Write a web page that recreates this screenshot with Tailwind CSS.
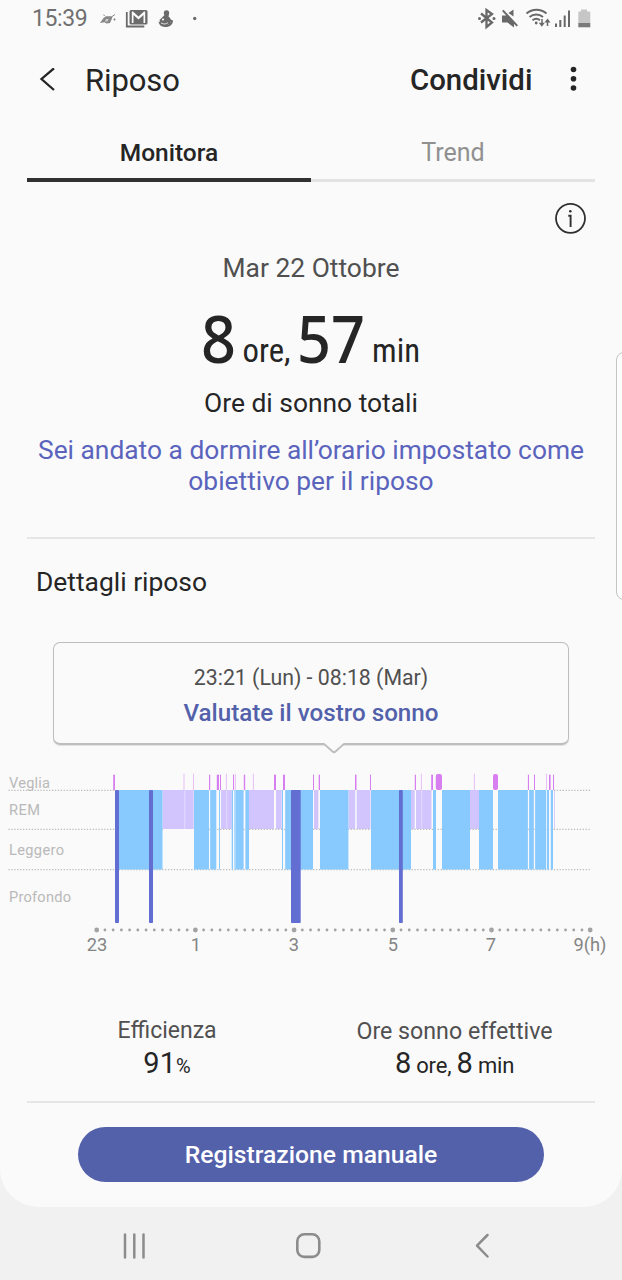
<!DOCTYPE html>
<html lang="it">
<head>
<meta charset="utf-8">
<title>Riposo</title>
<script src="https://cdn.jsdelivr.net/npm/@tailwindcss/browser@4"></script>
</head>
<body class="bg-[#f1f1f1] font-[Roboto,sans-serif] text-[#252525]">
<div class="relative flex h-[1280px] w-[622px] flex-col overflow-hidden">
  <main class="flex h-[1207px] flex-col rounded-b-[38px] bg-[#fafafa]">
    <!-- Status bar -->
    <div class="flex h-9 shrink-0 items-center justify-between pr-[31px] pl-8 text-[#707070]">
      <div class="flex items-center">
        <span class="w-[68px] pt-[2px] text-[23px] leading-9 tracking-[-0.4px] whitespace-nowrap">15:39</span>
        <svg class="h-[34px] w-[100px]" viewBox="100 0 100 34" fill="#6b6b6b">
          <path d="M100 22l3.500-5 2.500-1.800h6.500l-.5 2.300-2 4.500-3.500.5-2-1.200z" opacity=".8"/><path d="M105 20.500l1-2.500h2.500l-1 2.500z" fill="#d0d0d0"/><path d="M104.500 15l-.8-1.500M112 15.500l3-2" stroke="#8b8b8b"/><circle cx="114.500" cy="18.500" r=".9"/>
          <path d="M126.800 11v14.500h17.500" fill="none" stroke="#6b6b6b" stroke-width="1.800"/>
          <path fill-rule="evenodd" d="M131 9h15a1.500 1.500 0 0 1 1.500 1.500v11.500a1.500 1.500 0 0 1-1.500 1.500h-15a1.500 1.500 0 0 1-1.500-1.500v-11.500a1.500 1.500 0 0 1 1.500-1.500zM131.800 10.500v11.500h1.700v-8l5 4.500 5-4.500v8h1.700v-11.500h-1.200l-5.500 5-5.500-5z"/>
          <circle cx="166.500" cy="12" r="2.700"/><path d="M165 13.500h4l-.5 2c1.800 1.200 2.800 3 2.500 5l-1 3h-9l-1.500-4.500z"/><path d="M158.500 20.500c1 5 4.500 5.500 7.500 5.500s7-2 7-6.500l-2.500-1 .5 2.500-2 2.500z"/><circle cx="163" cy="18.500" r="1.100" fill="#fafafa"/><path d="M161 22c3 1.500 5 1.200 7-.3" fill="none" stroke="#fafafa" stroke-width=".8"/>
          <circle cx="194.700" cy="17.500" r="1.700"/>
        </svg>
      </div>
      <svg class="h-[34px] w-[114px]" viewBox="477 0 114 34" fill="#686868">
        <path d="M481 12.500l11 9-5.500 4.500V9l5.500 4-11 8.500" fill="none" stroke="#686868" stroke-width="2.300"/><circle cx="479.500" cy="17.500" r="1.500"/><circle cx="494" cy="17.500" r="1.500"/>
        <path d="M502 14.500h4.500l7.500 8v4l-6.500-5h-5.500zM508.500 12l5-3.500v7zM502 10l1.500-1.200 14.500 15.500-1.500 1.300z"/>
        <path d="M526.500 12.500a15 15 0 0 1 20 0M529.500 16a10.500 10.500 0 0 1 13.500 0M532.500 19.300a6 6 0 0 1 7.500 0" fill="none" stroke="#686868" stroke-width="1.900"/><circle cx="536.200" cy="22" r="1.400"/>
        <path d="M542 18v6M547.500 20v5" fill="none" stroke="#686868" stroke-width="1.500"/><path d="M538.800 21.800h6l-3 4zM544.500 21.500l3-4 3 4z"/>
        <path d="M555 22.500h2V26h-2zM559.300 19h2v7h-2zM563.700 14.500h2V26h-2zM568 9.500h2V26h-2z"/>
        <path d="M581 8.500h6v2h2.500q.8 0 .8 1V22h-12V11.500q0-1 .8-1h1.900z" fill="#c6c6c6"/><path d="M578.300 22h12v4.300h-12z" fill="#7a7a7a"/>
      </svg>
    </div>
    <!-- Title bar -->
    <header class="flex h-[88px] shrink-0 items-center">
      <svg class="ml-[39px] h-6 w-4" viewBox="0 0 16 24" fill="none" stroke="#252525" stroke-width="2.300"><path d="M15 .3L2.500 11L15 22"/></svg>
      <h1 class="ml-[30px] w-[325px] pt-[2px] text-[31px] leading-[88px] tracking-[-0.1px] whitespace-nowrap">Riposo</h1>
      <span class="w-[158px] text-[29.400px] leading-[88px] font-medium whitespace-nowrap">Condividi</span>
      <svg class="h-7 w-3" viewBox="0 -2 12 28" fill="#252525"><circle cx="5.500" cy="1.500" r="2.800"/><circle cx="5.500" cy="10.700" r="2.800"/><circle cx="5.500" cy="20" r="2.800"/></svg>
    </header>
    <!-- Tabs -->
    <nav class="mx-[27px] flex h-[58px] shrink-0 text-center text-[25px] leading-[57px]">
      <div class="w-[284px] border-b-4 border-[#303030] text-[24.500px] font-medium">Monitora</div>
      <div class="flex-1 border-b-[3px] border-[#e3e3e3] text-[#909090]">Trend</div>
    </nav>
    <!-- Summary -->
    <section class="mx-[27px] flex h-[357px] shrink-0 flex-col border-b-2 border-[#e6e6e6] text-center">
      <div class="flex h-[66px] justify-end pt-[20px] pr-[9px]">
        <svg class="h-8 w-8" viewBox="0 0 32 32" fill="none" stroke="#303030"><circle cx="16.500" cy="16.300" r="14.500" stroke-width="1.800"/><path d="M14.300 13.800h2.300V25" stroke-width="1.900"/><circle cx="16.300" cy="9.300" r="1.300" fill="#303030" stroke="none"/></svg>
      </div>
      <p class="h-10 text-[26.400px] leading-10 text-[#505050]">Mar 22 Ottobre</p>
      <svg class="-mt-1 -mb-2 h-[103px] w-full shrink-0" viewBox="27 284 568 103" fill="#252525">
        <g font-family="Noto Sans" font-weight="500" font-size="66"><text x="201" y="362.500" textLength="35" lengthAdjust="spacingAndGlyphs">8</text><text x="297" y="362.500" textLength="68" lengthAdjust="spacingAndGlyphs">57</text></g>
        <g font-family="Roboto Condensed, Roboto" font-size="33"><text x="242.500" y="362" textLength="48" lengthAdjust="spacingAndGlyphs">ore,</text><text x="372" y="362" textLength="48" lengthAdjust="spacingAndGlyphs">min</text></g>
      </svg>
      <p class="h-12 text-[26.400px] leading-12">Ore di sonno totali</p>
      <p class="mt-[8px] text-[26.350px] leading-[31px] text-[#5a64bd]">Sei andato a dormire all’orario impostato come<br>obiettivo per il riposo</p>
    </section>
    <!-- Sleep details -->
    <section class="flex h-[564px] shrink-0 flex-col">
      <h2 class="h-[103px] shrink-0 pl-[36px] text-[26.400px] leading-[86px]">Dettagli riposo</h2>
      <div class="relative mx-[53px] h-[103px] shrink-0 rounded-[7px] border border-b-2 border-[#bdbdbd] pt-[17px] text-center shadow-[0_1px_1px_#0000001a]">
        <p class="text-[21.300px] leading-[36px] text-[#505050]">23:21 (Lun) - 08:18 (Mar)</p>
        <p class="text-[24.200px] leading-[35px] font-medium text-[#5361ab]">Valutate il vostro sonno</p>
        <svg class="absolute top-[100px] left-[269px] h-3 w-[22px]" viewBox="0 0 22 12"><path d="M1 0h20l-8.500 8.500q-1.500 1.500-3 0z" fill="#fafafa"/><path d="M1 .8L9.500 8.500q1.500 1.500 3 0L21 .8" fill="none" stroke="#bdbdbd" stroke-width="1.800"/></svg>
      </div>
      <svg class="mt-[15px] h-[205px] w-full shrink-0" viewBox="0 760 622 205">
        <g id="wake" fill="#d77ff0"></g><g id="rem" fill="#d2c5fd"></g>
        <path d="M8.500 790.300H115M554 790.300H591M8.500 829.300H163M194 829.300H591M8.500 869.700H591" stroke="#bcbcbc" stroke-width="1.300" stroke-dasharray="1.300 1.600"/>
        <g id="light" fill="#88c9fe"></g><g id="gaps"></g><g id="deep" fill="#636ed2"></g><g id="axis" fill="#a3a3a3"></g>
        <g font-size="14.600" fill="#b9b9b9"><text x="9" y="788" textLength="41">Veglia</text><text x="9" y="815" textLength="31">REM</text><text x="9" y="855" textLength="55">Leggero</text><text x="9" y="902" textLength="62">Profondo</text></g>
        <g font-size="18.300" fill="#858585" text-anchor="middle"><text x="97" y="951">23</text><text x="196" y="951">1</text><text x="294" y="951">3</text><text x="393" y="951">5</text><text x="491" y="951">7</text><text x="590" y="951">9(h)</text></g>
      </svg>
      <div class="mx-[27px] flex h-[138px] shrink-0 border-b-2 border-[#e6e6e6] pt-[50px] text-center whitespace-nowrap">
        <div class="w-[280px] shrink-0"><p class="text-[23px] leading-8 text-[#505050]">Efficienza</p><p class="text-[29px] leading-[32px]">91<span class="text-[20px]">%</span></p></div>
        <div class="w-[295px] shrink-0"><p class="text-[23.200px] leading-8 text-[#505050]">Ore sonno effettive</p><p class="text-[29px] leading-[32px] tracking-[-0.2px]">8<span class="text-[22px]"> ore, </span>8<span class="text-[22px]"> min</span></p></div>
      </div>
    </section>
    <button class="ml-[78px] mt-[24px] h-[55px] w-[466px] shrink-0 rounded-full bg-[#5361ab] text-[24.700px] font-medium text-white">Registrazione manuale</button>
  </main>
  <!-- Navigation bar -->
  <div class="flex h-[73px] items-center pt-1 pl-[122px]">
    <svg class="h-7 w-6" viewBox="0 0 24 28" stroke="#8c8c8c" stroke-width="2.500" stroke-linecap="round"><path d="M3 2.500v23M12.300 2.500v23M21.500 2.500v23"/></svg>
    <svg class="ml-[148px] h-8 w-7" viewBox="0 0 28 32" fill="none" stroke="#8c8c8c" stroke-width="2.600"><rect x="3.300" y="4.300" width="22" height="22.600" rx="7"/></svg>
    <svg class="ml-[152px] h-7 w-4" viewBox="0 0 16 28" fill="none" stroke="#8c8c8c" stroke-width="2.500" stroke-linecap="round" stroke-linejoin="round"><path d="M13.500 3L3 13.700L13.500 24.500"/></svg>
  </div>
  <!-- Edge panel handle -->
  <div class="absolute top-[352px] left-[616px] h-[248px] w-4 rounded-[8px] border border-[#c4c4c4] bg-[#fdfdfd]"></div>
</div>
<script>
const add=(id,x,y,w,h,o={})=>{const r=document.createElementNS('http://www.w3.org/2000/svg','rect');for(const[k,v]of Object.entries({x,y,width:w,height:h,...o}))r.setAttribute(k,v);document.getElementById(id).appendChild(r)};
[[113.2,115],[209,210.2],[216.8,219],[220,221],[233,234],[243.8,245.2],[274,276],[283,285],[313,314],[318.7,320],[355,356.5],[370,371],[414.8,416],[431.2,433],[527.9,529],[534,535],[549,550.6],[553,554]].forEach(([a,b])=>add('wake',a,774.7,b-a,15.3));
[184,193.500,226.300,235.300,253.300,421.300,474.300,546.500].forEach(a=>add('wake',a-.4,773.700,.8,16.300,{opacity:.6}));
add('wake',435.800,774,6.200,16,{rx:2});add('wake',493,774,5,16,{rx:2});
[[162.5,193.7],[221,231.7],[249,274],[276,281.7],[314,318.4],[348.5,355.2],[356.7,370.5],[411,414.7],[416,431.5],[470,479],[554,554.8]].forEach(([a,b])=>add('rem',a,790,b-a,39));
[[119,162.5],[194,209],[210.2,216.3],[219,220],[231.7,233],[234.4,243.6],[245.4,249],[282,283],[285.2,313],[320,348.4],[371,411],[433,436],[442,470],[479,493],[498,527.9],[529.1,533.8],[535.1,546.2],[547,549],[550.8,553]].forEach(([a,b])=>add('light',a,790,b-a,79.500));
[184.500,226.500,421.500].forEach(x=>add('gaps',x,790,.6,39,{fill:'#ede6fd'}));
add('gaps',235.400,790,.6,79,{fill:'#c2e2fe'});
[[115,119],[149,153],[291,300.7],[399,402.8]].forEach(([a,b])=>add('deep',a,790,b-a,133,{rx:.7}));
for(let i=0;i<=60;i++){const r=i%12?1.400:2.400;add('axis',96.700+i*8.225-r,930-r,2*r,2*r,{rx:r})}
</script>
</body>
</html>
